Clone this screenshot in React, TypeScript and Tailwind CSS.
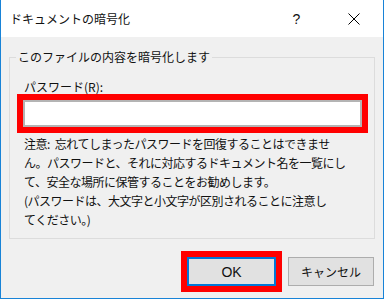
export default function App() {
  const jp = { fontFamily: '"Noto Sans CJK JP", "Noto Sans", sans-serif' };

  const noteLines = [
    "忘れてしまったパスワードを回復することはできませ",
    "ん。パスワードと、それに対応するドキュメント名を一覧にし",
    "て、安全な場所に保管することをお勧めします。",
    "(パスワードは、大文字と小文字が区別されることに注意し",
    "てください。)",
  ];

  return (
    <div
      className="w-[384px] h-[299px] bg-[#f0f0f0] border-x border-b border-[#1883d7] text-[#111] flex flex-col"
      style={jp}
    >
      {/* Title bar */}
      <div className="h-[37px] bg-white flex items-center pl-[9px] pr-[1px] shrink-0">
        <span className="text-[12px] leading-none flex-1">ドキュメントの暗号化</span>
        <div className="w-[57px] h-full flex items-center justify-center">
          <span
            className="text-[14px] leading-none"
            style={{ fontFamily: '"Liberation Sans", sans-serif' }}
          >
            ?
          </span>
        </div>
        <div className="w-[57px] h-full flex items-center justify-center">
          <svg width="12" height="12" viewBox="0 0 12 12">
            <path d="M0.5 0.5 L11.5 11.5 M11.5 0.5 L0.5 11.5" stroke="#000" strokeWidth="1" fill="none" />
          </svg>
        </div>
      </div>

      {/* Group box */}
      <fieldset className="mt-[12px] ml-[8px] w-[366px] border border-[#dcdcdc] pb-[9px]">
        <legend className="ml-[6px] px-[2px] text-[12px] leading-[16px]">
          このファイルの内容を暗号化します
        </legend>

        <div className="pl-[14px] mt-[15px] text-[12px] leading-[14px]">パスワード(R):</div>

        <div className="ml-[7px] w-[351px] h-[39px] border-[6px] border-[#ff0000]">
          <input
            type="password"
            className="w-full h-full bg-white border-2 border-[#b4b4b4] outline-none px-1 text-[12px]"
          />
        </div>

        <div className="pl-[14px] mt-[1px] text-[12px] leading-[19px] tracking-[-0.5px]">
          {noteLines.map((line, i) => (
            <div key={i} className="whitespace-nowrap">
              {i === 0 && <span className="mr-[5px]">注意:</span>}
              {line}
            </div>
          ))}
        </div>
      </fieldset>

      {/* Buttons */}
      <div className="flex justify-end items-center pr-[9px] mt-[12px]">
        <div className="w-[101px] h-[41px] border-[6px] border-[#ff0000]">
          <button
            className="w-full h-full bg-[#e1e1e1] border-2 border-[#0078d7] text-[14px] leading-none"
            style={{ fontFamily: '"Liberation Sans", sans-serif' }}
          >
            OK
          </button>
        </div>
        <button className="ml-[6px] w-[86px] h-[29px] bg-[#e1e1e1] border border-[#adadad] text-[12px] leading-none">
          キャンセル
        </button>
      </div>
    </div>
  );
}
